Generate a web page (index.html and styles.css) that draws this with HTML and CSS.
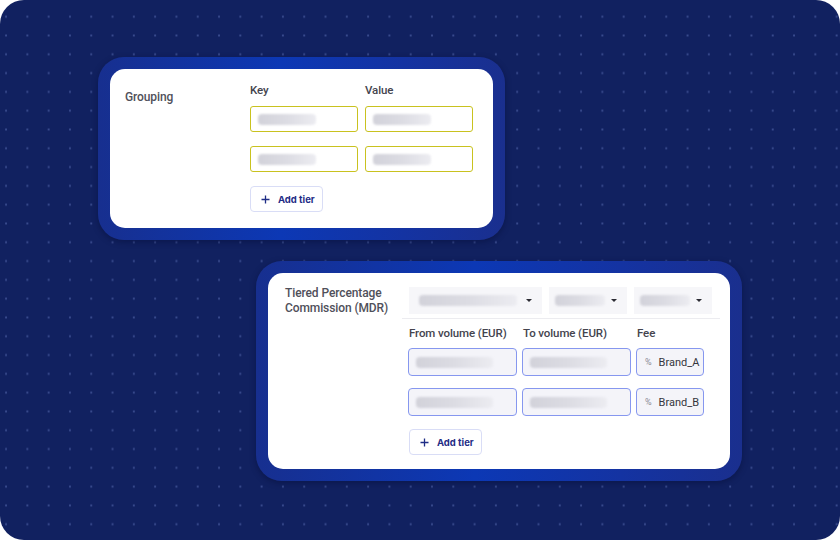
FILE: index.html
```html
<!DOCTYPE html>
<html>
<head>
<meta charset="utf-8">
<link rel="stylesheet" href="styles.css">
</head>
<body>
<div class="canvas">
  <div class="halo halo-one">
    <div class="card card-one">
      <div class="field-label grouping">Grouping</div>
      <div class="kv">
        <div class="col-head">Key</div>
        <div class="col-head">Value</div>
        <div class="input yellow"><span class="ph ph-a"></span></div>
        <div class="input yellow"><span class="ph ph-a"></span></div>
        <div class="input yellow"><span class="ph ph-a"></span></div>
        <div class="input yellow"><span class="ph ph-a"></span></div>
        <button class="add-btn"><svg width="9" height="9" viewBox="0 0 9 9"><path d="M4.5 0.5v8M0.5 4.5h8" stroke="#1f2d86" stroke-width="1.3" fill="none"/></svg>Add tier</button>
      </div>
    </div>
  </div>

  <div class="halo halo-two">
    <div class="card card-two">
      <div class="field-label tiered">Tiered Percentage<br>Commission (MDR)</div>
      <div class="tier-col">
        <div class="selects">
          <div class="select s-wide"><span class="ph ph-wide"></span><span class="caret"></span></div>
          <div class="select s-small"><span class="ph ph-small"></span><span class="caret"></span></div>
          <div class="select s-small"><span class="ph ph-small"></span><span class="caret"></span></div>
        </div>
        <div class="divider"></div>
        <div class="tiers">
          <div class="col-head">From volume (EUR)</div>
          <div class="col-head">To volume (EUR)</div>
          <div class="col-head">Fee</div>
          <div class="input blue"><span class="ph ph-b"></span></div>
          <div class="input blue"><span class="ph ph-b"></span></div>
          <div class="input blue fee"><span class="pct">%</span><span>Brand_A</span></div>
          <div class="input blue"><span class="ph ph-b"></span></div>
          <div class="input blue"><span class="ph ph-b"></span></div>
          <div class="input blue fee"><span class="pct">%</span><span>Brand_B</span></div>
        </div>
        <button class="add-btn add-two"><svg width="9" height="9" viewBox="0 0 9 9"><path d="M4.5 0.5v8M0.5 4.5h8" stroke="#1f2d86" stroke-width="1.3" fill="none"/></svg>Add tier</button>
      </div>
    </div>
  </div>
</div>
</body>
</html>
```

FILE: styles.css
```css
* { box-sizing: border-box; }
html, body { margin: 0; padding: 0; background: #ffffff; }
body { font-family: "Roboto", "Inter", sans-serif; }

.canvas {
  position: relative;
  width: 840px;
  height: 540px;
  border-radius: 24px;
  overflow: hidden;
  background-color: #112160;
  background-image: radial-gradient(circle, rgba(95,115,185,0.5) 0.9px, transparent 1.3px);
  background-size: 21.3px 18.8px;
  background-position: -4.6px 7.3px;
}

.halo {
  position: absolute;
  padding: 12px;
  border-radius: 26px;
  background: linear-gradient(90deg, #172f8f 0%, #0c38b5 45%, #1433a2 75%, #1a2f8e 100%);
  box-shadow: 0 2px 6px rgba(5,12,50,0.45);
}
.halo-one { left: 98px; top: 57px; width: 407px; height: 183px; }
.halo-two { left: 256px; top: 261px; width: 486px; height: 220px; }

.card {
  background: #ffffff;
  border-radius: 15px;
  height: 100%;
  display: flex;
}

.field-label {
  font-size: 12px;
  line-height: 15px;
  color: #50505a;
  font-weight: 500;
  letter-spacing: -0.1px;
}

/* card one */
.card-one { padding: 13px 16px 16px 15px; }
.grouping { width: 125px; margin-top: 8px; }
.kv {
  display: grid;
  grid-template-columns: 108px 108px;
  column-gap: 7px;
  row-gap: 14px;
  align-content: start;
}
.kv .col-head { margin-bottom: -6px; }
.col-head {
  font-size: 11.5px;
  line-height: 16px;
  color: #44444e;
  font-weight: 500;
  letter-spacing: -0.1px;
}

.input {
  height: 26px;
  border-radius: 3px;
  display: flex;
  align-items: center;
  padding-left: 7px;
}
.input.yellow { border: 1.3px solid #c9c21f; background: #ffffff; }
.input.blue { border: 1.3px solid #8697ef; background: #f4f4f9; height: 28px; border-radius: 4px; }

.ph {
  display: block;
  height: 11px;
  border-radius: 4px;
  background: linear-gradient(90deg, #d2d2da 0%, #dcdce3 50%, #ececf1 100%);
  filter: blur(0.8px);
}
.ph-a { width: 58px; }
.ph-b { width: 77px; }
.ph-wide { width: 98px; }
.ph-small { width: 50px; }

.add-btn {
  grid-column: 1;
  width: 73px;
  height: 26px;
  border: 1px solid #d9ddf6;
  border-radius: 4px;
  background: #ffffff;
  display: flex;
  align-items: center;
  gap: 8px;
  padding: 0 0 0 10px;
  font-family: "Inter", sans-serif;
  font-size: 9.5px;
  font-weight: 700;
  color: #1f2d86;
}

/* card two */
.card-two { padding: 12px 10px 14px 17px; }
.tiered { width: 117px; margin-top: 1px; }
.tier-col { display: flex; flex-direction: column; width: 318px; }
.selects { display: flex; gap: 7px; padding-left: 7px; padding-top: 2px; }
.select {
  height: 27px;
  background: #f6f6f9;
  display: flex;
  align-items: center;
  padding-left: 10px;
  position: relative;
}
.s-wide { width: 133px; }
.s-small { width: 78px; padding-left: 6px; }
.caret {
  position: absolute;
  right: 10px;
  top: 12px;
  width: 0; height: 0;
  border-left: 3px solid transparent;
  border-right: 3px solid transparent;
  border-top: 3.5px solid #2b2b33;
}
.divider { height: 1px; background: #ececf0; margin-top: 4px; }
.tiers {
  display: grid;
  grid-template-columns: 109px 109px 68px;
  column-gap: 5px;
  row-gap: 12px;
  padding-left: 6px;
  margin-top: 6px;
}
.tiers .col-head { margin-bottom: -5px; padding-left: 1px; }
.fee { padding-left: 8px; font-size: 11px; color: #34343c; }
.pct { font-size: 9px; color: #8a8a95; margin-right: 7px; }
.add-two { margin: 13px 0 0 7px; }
```
